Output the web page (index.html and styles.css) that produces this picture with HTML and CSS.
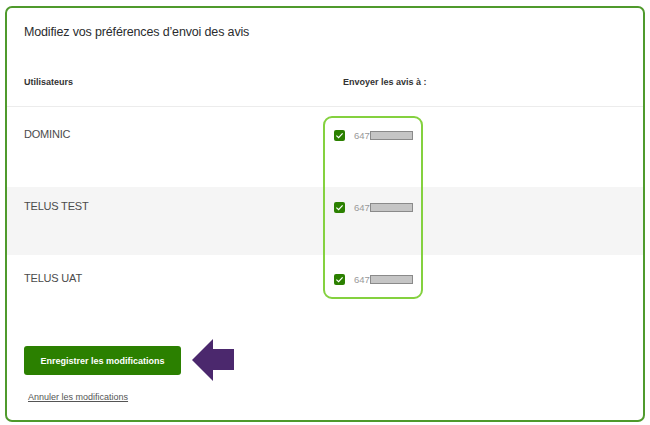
FILE: index.html
```html
<!DOCTYPE html>
<html lang="fr">

<head>
    <meta charset="UTF-8">
    <title>Préférences d'envoi des avis</title>
    <link rel="stylesheet" href="styles.css">
</head>

<body>

    <div class="card">
        <h2 class="title">Modifiez vos préférences d’envoi des avis</h2>

        <div class="table-head">
            <span>Utilisateurs</span>
            <span>Envoyer les avis à :</span>
        </div>

        <div class="rows">
            <div class="row">
                <div class="name">DOMINIC</div>
                <label class="phone">
                    <span class="check"><svg viewBox="0 0 12 12"><path d="M2.6 6.2 L5 8.4 L9.4 3.6" /></svg></span>
                    <span class="num">647</span><span class="redact"></span>
                </label>
            </div>
            <div class="row alt">
                <div class="name">TELUS TEST</div>
                <label class="phone">
                    <span class="check"><svg viewBox="0 0 12 12"><path d="M2.6 6.2 L5 8.4 L9.4 3.6" /></svg></span>
                    <span class="num">647</span><span class="redact"></span>
                </label>
            </div>
            <div class="row">
                <div class="name">TELUS UAT</div>
                <label class="phone">
                    <span class="check"><svg viewBox="0 0 12 12"><path d="M2.6 6.2 L5 8.4 L9.4 3.6" /></svg></span>
                    <span class="num">647</span><span class="redact"></span>
                </label>
            </div>
        </div>

        <div class="actions">
            <button class="save">Enregistrer les modifications</button>
            <svg class="arrow" width="42" height="43" viewBox="0 0 42 43">
                <polygon points="0,21 21,0 21,10 42,10 42,31 21,31 21,42" />
            </svg>
        </div>

        <a class="cancel" href="#">Annuler les modifications</a>

        <!-- highlight around the phone column -->
        <div class="highlight"></div>
    </div>

</body>

</html>
```

FILE: styles.css
```css
body {
    margin: 0;
    font-family: "Liberation Sans", Arial, sans-serif;
    background: #fff;
    color: #2a2c2e;
}

.card {
    position: relative;
    margin: 6px 5px 0 5px;
    height: 416px;
    box-sizing: border-box;
    border: 2px solid #4f9a2c;
    border-radius: 7px;
}

.title {
    margin: 0;
    padding: 15px 0 0 17px;
    font-size: 12.5px;
    line-height: 18px;
    letter-spacing: -0.15px;
    font-weight: normal;
    color: #2a2c2e;
}

.table-head {
    display: grid;
    grid-template-columns: 319px 1fr;
    margin-top: 34px;
    padding: 0 0 17px 17px;
    font-size: 9px;
    line-height: 14px;
    font-weight: bold;
    color: #333;
    border-bottom: 1px solid #ececec;
}

.rows {
    display: flex;
    flex-direction: column;
    gap: 4px;
    margin-top: 8px;
}

.row {
    display: grid;
    grid-template-columns: 310px 1fr;
    align-items: start;
    height: 68px;
    box-sizing: border-box;
    padding: 12px 0 0 17px;
}

.row.alt {
    background: #f5f5f5;
}

.name {
    font-size: 11px;
    line-height: 14px;
    letter-spacing: -0.2px;
    color: #4b4b4b;
}

.phone {
    display: flex;
    align-items: center;
    height: 14px;
    margin-top: 1px;
}

.check {
    display: flex;
    width: 11px;
    height: 11px;
    border-radius: 2px;
    background: #2b8000;
    margin-right: 9px;
}

.check svg {
    width: 11px;
    height: 11px;
    fill: none;
    stroke: #fff;
    stroke-width: 1.3;
}

.num {
    font-size: 9.5px;
    color: #999;
}

.redact {
    width: 41px;
    height: 7px;
    margin-top: 1px;
    background: #c5c5c5;
    border: 1px solid #8a8a8a;
}

.actions {
    display: flex;
    align-items: center;
    gap: 11px;
    margin: 12px 0 0 17px;
}

.save {
    width: 157px;
    height: 29px;
    border: none;
    border-radius: 3px;
    background: #2b8000;
    color: #fff;
    font-family: "Liberation Sans", Arial, sans-serif;
    font-size: 9px;
    font-weight: bold;
    cursor: pointer;
}

.arrow {
    fill: #4b286d;
}

.cancel {
    display: inline-block;
    margin: 9px 0 0 21px;
    font-size: 9px;
    line-height: 12px;
    color: #555;
}

.highlight {
    position: absolute;
    left: 316px;
    top: 108px;
    width: 100px;
    height: 183px;
    box-sizing: border-box;
    border: 2px solid #84d13f;
    border-radius: 9px;
}
```
